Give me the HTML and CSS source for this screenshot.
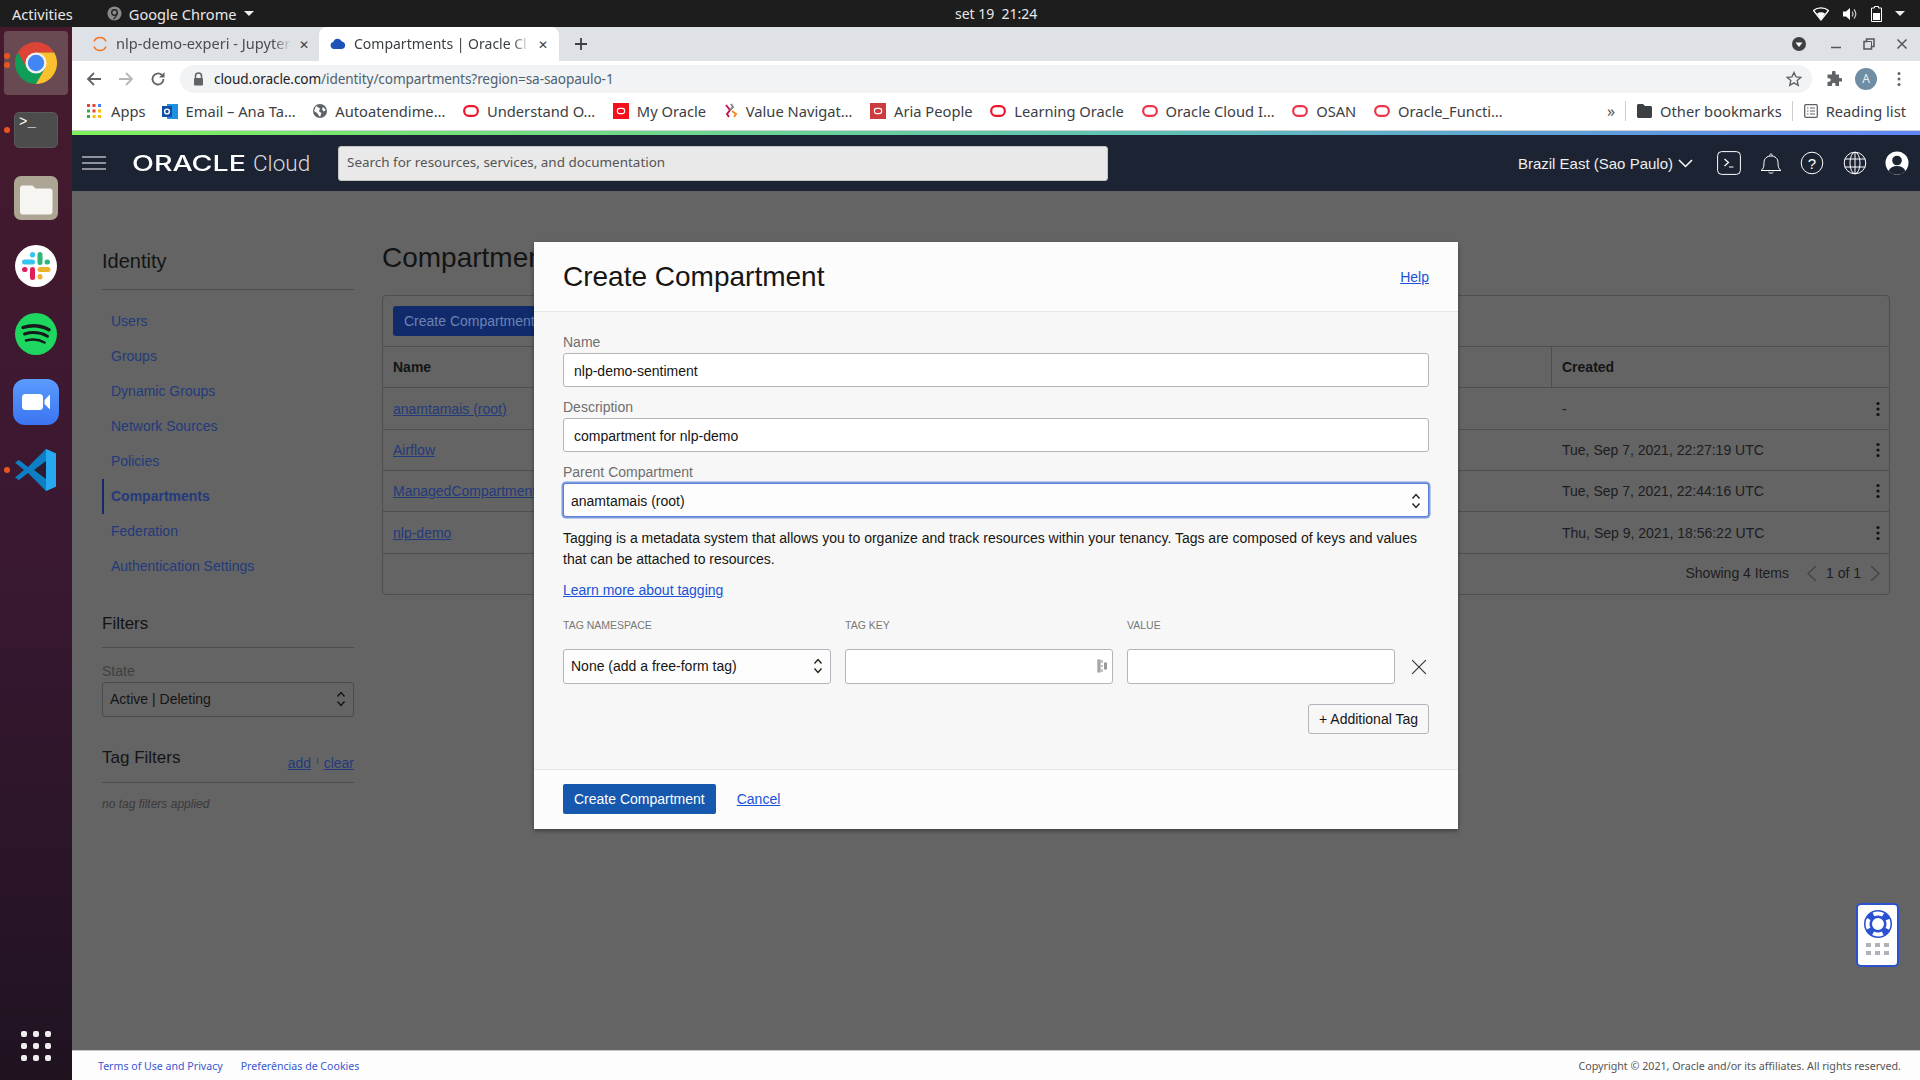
FILE: index.html
```html
<!DOCTYPE html>
<html lang="en">
<head>
  <meta charset="UTF-8">
  <title>Compartments | Oracle Cloud Infrastructure</title>
  <link rel="stylesheet" href="styles.css">
</head>
<body>
  <svg class="sprites" width="0" height="0">
    <symbol id="ring" viewBox="0 0 16 16"><rect x="1.2" y="3.2" width="13.6" height="9.6" rx="4.6" fill="none" stroke="currentColor" stroke-width="2.2"/></symbol>
    <symbol id="updown" viewBox="0 0 10 18"><path d="M1.5 6.5 5 2.5l3.5 4M1.5 11.5l3.5 4 3.5-4" fill="none" stroke="currentColor" stroke-width="1.4"/></symbol>
    <symbol id="kebab" viewBox="0 0 6 16"><circle cx="3" cy="2.5" r="1.6"/><circle cx="3" cy="8" r="1.6"/><circle cx="3" cy="13.5" r="1.6"/></symbol>
  </svg>

  <!-- gnome top bar -->
  <div class="topbar">
    <span class="topbar-activities">Activities</span>
    <span class="topbar-app">
      <svg width="15" height="15" viewBox="0 0 16 16"><circle cx="8" cy="8" r="7.5" fill="#8a8a8a"/><circle cx="8" cy="7" r="3" fill="none" stroke="#222" stroke-width="1.4"/><path d="M11 7c0 3-2 5-4 7" fill="none" stroke="#222" stroke-width="1.4"/></svg>
      Google Chrome
      <i class="caret"></i>
    </span>
    <span class="topbar-clock">set 19&nbsp; 21:24</span>
    <span class="topbar-status">
      <svg width="16" height="14" viewBox="0 0 16 14"><path d="M0.5 3.5C4.5 0 11.5 0 15.5 3.5L8 13Z" fill="none" stroke="#fff" stroke-width="1.3"/><path d="M4 6.5c2.400-1.700 5.600-1.700 8 0L8 13Z" fill="#fff"/></svg>
      <svg width="16" height="14" viewBox="0 0 16 14"><path d="M1 4.500h3L8 1v12L4 9.500H1Z" fill="#fff"/><path d="M10 4.500c1.200 1.500 1.200 3.500 0 5M12 2.500c2.200 2.700 2.200 6.300 0 9" fill="none" stroke="#ccc" stroke-width="1.200"/></svg>
      <svg width="11" height="16" viewBox="0 0 11 16"><path d="M3.500 0.500h4v1.500h3v13.500h-10V2h3Z" fill="none" stroke="#fff" stroke-width="1"/><rect x="2" y="7" width="7" height="7" fill="#fff"/></svg>
      <i class="caret"></i>
    </span>
  </div>

  <div class="desktop">
    <!-- launcher -->
    <div class="dock">
      <div class="dock-item dock-active">
        <i class="run-dot run-dot-a"></i><i class="run-dot run-dot-b"></i>
        <svg width="46" height="46" viewBox="0 0 48 48">
          <path d="M43 13A22 22 0 0 0 5 13L14.500 29.500 24 13Z" fill="#db4437"/>
          <path d="M5 13A22 22 0 0 0 24 46L33.500 29.500H14.500Z" fill="#0f9d58"/>
          <path d="M24 46A22 22 0 0 0 43 13H24L33.500 29.500Z" fill="#fbc02d"/>
          <circle cx="24" cy="24" r="11" fill="#f1f1f1"/><circle cx="24" cy="24" r="8.500" fill="#4285f4"/>
        </svg>
      </div>
      <div class="dock-item">
        <i class="run-dot"></i>
        <div class="tile-terminal">&gt;_</div>
      </div>
      <div class="dock-item">
        <svg width="44" height="44" viewBox="0 0 44 44">
          <rect width="44" height="44" rx="7" fill="#aca593"/>
          <path d="M6 12c0-1.500 1-2.500 2.500-2.500h10l3 3H36c1.500 0 2.500 1 2.500 2.500v21c0 1.500-1 2.500-2.500 2.500H8.500C7 38.500 6 37.500 6 36Z" fill="#f6f5f2"/>
        </svg>
      </div>
      <div class="dock-item">
        <svg width="42" height="42" viewBox="0 0 42 42">
          <circle cx="21" cy="21" r="21" fill="#fff"/>
          <rect x="7" y="14.500" width="13" height="5" rx="2.500" fill="#36c5f0"/><rect x="15" y="7" width="5" height="5.500" rx="2.500" fill="#36c5f0"/>
          <rect x="22.500" y="7" width="5" height="13" rx="2.500" fill="#2eb67d"/><rect x="29.500" y="14.500" width="5.500" height="5" rx="2.500" fill="#2eb67d"/>
          <rect x="22.500" y="22" width="13" height="5" rx="2.500" fill="#ecb22e"/><rect x="22.500" y="29" width="5" height="5.500" rx="2.500" fill="#ecb22e"/>
          <rect x="15" y="22" width="5" height="13" rx="2.500" fill="#e01e5a"/><rect x="7" y="22" width="5.500" height="5" rx="2.500" fill="#e01e5a"/>
        </svg>
      </div>
      <div class="dock-item">
        <svg width="42" height="42" viewBox="0 0 42 42">
          <circle cx="21" cy="21" r="21" fill="#1ed760"/>
          <path d="M8 14.500c8.500-2.800 18-2 26 2.200" fill="none" stroke="#17191a" stroke-width="3.400" stroke-linecap="round"/>
          <path d="M9.500 21c7.500-2.200 16-1.600 23 2.200" fill="none" stroke="#17191a" stroke-width="3" stroke-linecap="round"/>
          <path d="M11 27.500c6-1.600 13-1.200 18.500 2" fill="none" stroke="#17191a" stroke-width="2.600" stroke-linecap="round"/>
        </svg>
      </div>
      <div class="dock-item">
        <svg width="46" height="46" viewBox="0 0 46 46">
          <defs><linearGradient id="zoombg" x1="0" y1="0" x2="0" y2="1"><stop offset="0" stop-color="#5b9cff"/><stop offset="1" stop-color="#3a74f0"/></linearGradient></defs>
          <rect width="46" height="46" rx="12" fill="url(#zoombg)"/>
          <rect x="9" y="15" width="21" height="16" rx="3.500" fill="#fff"/><path d="M31.500 21 37 15.500v15L31.500 25Z" fill="#fff"/>
        </svg>
      </div>
      <div class="dock-item">
        <i class="run-dot"></i>
        <svg width="44" height="44" viewBox="0 0 44 44">
          <path d="M32 1 14 19 5 12 1 14.500 10 22 1 29.500 5 32l9-7 18 18 10-4.500V5.500Z" fill="#0e7fc4"/>
          <path d="M32 1l10 4.500v33L32 43Z" fill="#27a9f1"/>
          <path d="M32 13v18L20 22Z" fill="#2f1a30"/>
        </svg>
      </div>
      <div class="dock-apps">
        <i></i><i></i><i></i><i></i><i></i><i></i><i></i><i></i><i></i>
      </div>
    </div>

    <div class="window">
      <!-- browser chrome -->
      <div class="tabstrip">
        <div class="tab">
          <svg width="16" height="16" viewBox="0 0 16 16"><path d="M2 5.500a6.500 6.500 0 0 1 12 0M2 10.500a6.500 6.500 0 0 0 12 0" fill="none" stroke="#f37726" stroke-width="1.600"/></svg>
          <span class="tab-title">nlp-demo-experi - Jupyter</span>
          <span class="tab-close">✕</span>
        </div>
        <div class="tab tab-active">
          <svg width="16" height="16" viewBox="0 0 16 16"><path d="M4 13a3.500 3.500 0 0 1-.7-6.900A4.500 4.500 0 0 1 11.800 5.500 3.800 3.800 0 0 1 12 13Z" fill="#1f52b8"/></svg>
          <span class="tab-title">Compartments | Oracle Cl</span>
          <span class="tab-close">✕</span>
        </div>
        <svg class="tab-new" width="14" height="14" viewBox="0 0 14 14"><path d="M7 1v12M1 7h12" stroke="#3c4043" stroke-width="1.800"/></svg>
        <div class="win-controls">
          <svg class="win-profile" width="14" height="14" viewBox="0 0 14 14"><circle cx="7" cy="7" r="7" fill="#3c4043"/><path d="M3.500 5.500h7L7 10Z" fill="#fff"/></svg>
          <svg width="12" height="12" viewBox="0 0 12 12"><path d="M1 9.500h10" stroke="#555" stroke-width="1.500"/></svg>
          <svg width="12" height="12" viewBox="0 0 12 12"><path d="M3.500 1h7.500v7.500H8.500V11H1V3.500h2.500Z" fill="none" stroke="#555" stroke-width="1.500"/><path d="M3.500 3.500h5V8.500" fill="none" stroke="#555" stroke-width="1"/></svg>
          <svg width="12" height="12" viewBox="0 0 12 12"><path d="M1.500 1.500l9 9M10.500 1.500l-9 9" stroke="#555" stroke-width="1.500"/></svg>
        </div>
      </div>

      <div class="toolbar">
        <svg class="tool-back" width="16" height="16" viewBox="0 0 16 16"><path d="M15 8H2M8 2 2 8l6 6" fill="none" stroke="#5f6368" stroke-width="1.800"/></svg>
        <svg class="tool-fwd" width="16" height="16" viewBox="0 0 16 16"><path d="M1 8h13M8 2l6 6-6 6" fill="none" stroke="#b4b6b9" stroke-width="1.800"/></svg>
        <svg class="tool-reload" width="16" height="16" viewBox="0 0 16 16"><path d="M13.500 8A5.500 5.500 0 1 1 11.800 4" fill="none" stroke="#5f6368" stroke-width="1.800"/><path d="M14.500 1v5.500H9Z" fill="#5f6368"/></svg>
        <div class="urlbar">
          <svg width="11" height="14" viewBox="0 0 11 14"><path d="M2.500 6V4a3 3 0 0 1 6 0v2" fill="none" stroke="#5f6368" stroke-width="1.500"/><rect x="1" y="6" width="9" height="7.500" rx="1" fill="#5f6368"/></svg>
          <span class="url-text"><b>cloud.oracle.com</b>/identity/compartments?region=sa-saopaulo-1</span>
          <svg class="url-star" width="16" height="16" viewBox="0 0 16 16"><path d="M8 1.500l2 4.400 4.700.5-3.500 3.200 1 4.700L8 11.900l-4.200 2.400 1-4.700L1.300 6.400 6 5.900Z" fill="none" stroke="#5f6368" stroke-width="1.400"/></svg>
        </div>
        <svg class="tool-ext" width="16" height="16" viewBox="0 0 16 16"><path d="M6 1.500a1.800 1.800 0 0 1 3.600 0V3.500H13V7h1.700a1.800 1.800 0 0 1 0 3.600H13V15H9.500v-1.500a1.800 1.800 0 0 0-3.600 0V15H1.500v-4.200H3a1.800 1.800 0 0 0 0-3.600H1.500V3.500H6Z" fill="#5f6368"/></svg>
        <span class="tool-avatar">A</span>
        <svg class="tool-menu" width="4" height="16" viewBox="0 0 4 16"><circle cx="2" cy="2.500" r="1.500" fill="#5f6368"/><circle cx="2" cy="8" r="1.500" fill="#5f6368"/><circle cx="2" cy="13.500" r="1.500" fill="#5f6368"/></svg>
      </div>

      <div class="bookmarks">
        <span class="bm bm-apps">
          <svg class="bm-icon" width="14" height="14" viewBox="0 0 14 14"><g fill="#ea4335"><rect width="3" height="3"/><rect x="5.500" width="3" height="3"/></g><rect x="11" width="3" height="3" fill="#4285f4"/><rect y="5.500" width="3" height="3" fill="#34a853"/><rect x="5.500" y="5.500" width="3" height="3" fill="#ea4335"/><rect x="11" y="5.500" width="3" height="3" fill="#fbbc04"/><rect y="11" width="3" height="3" fill="#34a853"/><rect x="5.500" y="11" width="3" height="3" fill="#fbbc04"/><rect x="11" y="11" width="3" height="3" fill="#fbbc04"/></svg>
          Apps
        </span>
        <span class="bm">
          <svg class="bm-icon" width="16" height="16" viewBox="0 0 16 16"><rect x="5" y="1" width="11" height="15" fill="#1e90e0"/><rect x="0" y="3" width="10" height="11" fill="#0f4fa8"/><circle cx="5" cy="8.500" r="2.400" fill="none" stroke="#fff" stroke-width="1.400"/></svg>
          Email – Ana Ta…
        </span>
        <span class="bm">
          <svg class="bm-icon" width="14" height="14" viewBox="0 0 14 14"><circle cx="7" cy="7" r="7" fill="#5f6368"/><path d="M3 2l4 2.500-1 3 2.500 1.500L7 13 4 9 1 7Zm7 1l3 3-2.500 1.500L9 5Z" fill="#fff"/></svg>
          Autoatendime…
        </span>
        <span class="bm"><svg class="bm-icon bm-ring" width="16" height="16"><use href="#ring"/></svg>Understand O…</span>
        <span class="bm"><span class="bm-square bm-square-bright"><svg width="16" height="16"><use href="#ring"/></svg></span>My Oracle</span>
        <span class="bm">
          <svg class="bm-icon" width="14" height="16" viewBox="0 0 14 16"><path d="M2 2l4 5-3 4 2 3" fill="none" stroke="#c2185b" stroke-width="2"/><path d="M7 1l2 3-3 3" fill="none" stroke="#888" stroke-width="2"/><path d="M8 8l4 3-2 3" fill="none" stroke="#f28c28" stroke-width="2"/></svg>
          Value Navigat…
        </span>
        <span class="bm"><span class="bm-square"><svg width="16" height="16"><use href="#ring"/></svg></span>Aria People</span>
        <span class="bm"><svg class="bm-icon bm-ring" width="16" height="16"><use href="#ring"/></svg>Learning Oracle</span>
        <span class="bm"><svg class="bm-icon bm-ring bm-ring-soft" width="16" height="16"><use href="#ring"/></svg>Oracle Cloud I…</span>
        <span class="bm"><svg class="bm-icon bm-ring bm-ring-soft" width="16" height="16"><use href="#ring"/></svg>OSAN</span>
        <span class="bm"><svg class="bm-icon bm-ring bm-ring-soft" width="16" height="16"><use href="#ring"/></svg>Oracle_Functi…</span>
        <span class="bm-more">»</span>
        <span class="bm bm-sep">
          <svg class="bm-icon" width="15" height="14" viewBox="0 0 15 14"><path d="M0 1.500C0 .7.700 0 1.500 0H6l2 2h5.500c.800 0 1.500.700 1.500 1.500v9c0 .800-.700 1.500-1.500 1.500h-12C.700 14 0 13.300 0 12.500Z" fill="#3c4043"/></svg>
          Other bookmarks
        </span>
        <span class="bm bm-sep">
          <svg class="bm-icon" width="14" height="14" viewBox="0 0 14 14"><rect x=".7" y=".7" width="12.600" height="12.600" rx="1" fill="none" stroke="#5f6368" stroke-width="1.300"/><path d="M3 4h1.500M6 4h5M3 7h1.500M6 7h5M3 10h1.500M6 10h5" stroke="#5f6368" stroke-width="1.200"/></svg>
          Reading list
        </span>
      </div>
      <div class="load-line"></div>

      <!-- oracle console header -->
      <div class="app-header">
        <svg class="hamburger" width="24" height="14" viewBox="0 0 24 14"><path d="M0 1h24M0 7h24M0 13h24" stroke="#fff" stroke-width="1.200"/></svg>
        <span class="logo"><span class="logo-oracle">ORACLE</span><span class="logo-cloud">Cloud</span></span>
        <div class="search">Search for resources, services, and documentation</div>
        <span class="region">Brazil East (Sao Paulo)
          <svg width="15" height="9" viewBox="0 0 15 9"><path d="M1 1l6.500 6.500L14 1" fill="none" stroke="#fff" stroke-width="1.500"/></svg>
        </span>
        <div class="header-icons">
          <svg width="24" height="24" viewBox="0 0 24 24"><rect x=".6" y=".6" width="22.800" height="22.800" rx="4" fill="none" stroke="#fff" stroke-width="1"/><path d="M7.500 8l4 3.500-4 3.500M12 16h4.500" fill="none" stroke="#fff" stroke-width="1.200"/></svg>
          <svg width="22" height="26" viewBox="0 0 22 24"><path d="M1 19.500c2.500-1.500 3-4 3-8 0-4 3-6.500 7-6.500s7 2.500 7 6.500c0 4 .5 6.500 3 8ZM9.500 5c0-1 .500-2 1.500-2s1.500 1 1.500 2M8.500 21c.5 1.500 4.500 1.500 5 0" fill="none" stroke="#fff" stroke-width="1"/></svg>
          <svg width="24" height="24" viewBox="0 0 24 24"><circle cx="12" cy="12" r="10.800" fill="none" stroke="#fff" stroke-width="1"/><text class="help-mark" x="12" y="17.500" text-anchor="middle">?</text></svg>
          <svg width="24" height="24" viewBox="0 0 24 24"><g fill="none" stroke="#fff" stroke-width="1"><circle cx="12" cy="12" r="10.800"/><ellipse cx="12" cy="12" rx="5" ry="10.800"/><path d="M12 1v22M1.800 8h20.400M1.800 16h20.400"/></g></svg>
          <svg width="24" height="24" viewBox="0 0 24 24"><circle cx="12" cy="12" r="11.500" fill="#fff"/><circle cx="12" cy="9.500" r="4.800" fill="#1c2333"/><path d="M3.500 20c1.500-3.500 4.500-5 8.500-5s7 1.500 8.500 5c-2 2.500-5 3.500-8.500 3.500S5.500 22.500 3.500 20Z" fill="#1c2333"/></svg>
        </div>
      </div>

      <div class="app-body">
        <aside class="sidebar">
          <h2 class="side-title">Identity</h2>
          <nav class="side-nav">
            <a>Users</a>
            <a>Groups</a>
            <a>Dynamic Groups</a>
            <a>Network Sources</a>
            <a>Policies</a>
            <a class="current">Compartments</a>
            <a>Federation</a>
            <a>Authentication Settings</a>
          </nav>
          <h2 class="side-title side-title-filters">Filters</h2>
          <div class="side-label">State</div>
          <div class="side-select">Active | Deleting
            <svg width="10" height="18"><use href="#updown"/></svg>
          </div>
          <div class="side-title side-title-tags">
            <span>Tag Filters</span>
            <span class="tag-actions"><a>add</a><i>I</i><a>clear</a></span>
          </div>
          <div class="no-tags">no tag filters applied</div>
        </aside>

        <main class="content">
          <h1 class="page-title">Compartments</h1>
          <div class="table-card">
            <div class="table-tools"><span class="btn-dim">Create Compartment</span></div>
            <div class="table-row table-head"><span>Name</span><span class="cell-created">Created</span></div>
            <div class="table-row row-1"><a>anamtamais (root)</a><span class="cell-created">-</span><svg class="kebab" width="6" height="16"><use href="#kebab"/></svg></div>
            <div class="table-row"><a>Airflow</a><span class="cell-created">Tue, Sep 7, 2021, 22:27:19 UTC</span><svg class="kebab" width="6" height="16"><use href="#kebab"/></svg></div>
            <div class="table-row"><a>ManagedCompartmentForPaaS</a><span class="cell-created">Tue, Sep 7, 2021, 22:44:16 UTC</span><svg class="kebab" width="6" height="16"><use href="#kebab"/></svg></div>
            <div class="table-row row-1"><a>nlp-demo</a><span class="cell-created">Thu, Sep 9, 2021, 18:56:22 UTC</span><svg class="kebab" width="6" height="16"><use href="#kebab"/></svg></div>
            <div class="table-foot">
              <span>Showing 4 Items</span>
              <svg width="11" height="17" viewBox="0 0 11 17"><path d="M10 1 2 8.500l8 7.500" fill="none" stroke="#444" stroke-width="1.300"/></svg>
              <span>1 of 1</span>
              <svg width="11" height="17" viewBox="0 0 11 17"><path d="M1 1l8 7.500L1 16" fill="none" stroke="#444" stroke-width="1.300"/></svg>
            </div>
          </div>
        </main>

        <div class="help-widget">
          <svg width="30" height="30" viewBox="0 0 30 30"><circle cx="15" cy="15" r="10" fill="none" stroke="#2a52d0" stroke-width="8"/><circle cx="15" cy="15" r="10.500" fill="none" stroke="#fff" stroke-width="4" stroke-dasharray="10 6.490" stroke-dashoffset="5"/></svg>
          <div class="help-dots"><i></i><i></i><i></i><i></i><i></i><i></i></div>
        </div>

        <div class="modal">
          <div class="modal-head">
            <h1>Create Compartment</h1>
            <a>Help</a>
          </div>
          <div class="modal-body">
            <label class="field-label">Name</label>
            <div class="input">nlp-demo-sentiment</div>
            <label class="field-label">Description</label>
            <div class="input">compartment for nlp-demo</div>
            <label class="field-label">Parent Compartment</label>
            <div class="input input-select input-focus">anamtamais (root)
              <svg width="10" height="18"><use href="#updown"/></svg>
            </div>
            <p class="tag-intro">Tagging is a metadata system that allows you to organize and track resources within your tenancy. Tags are composed of keys and values that can be attached to resources.</p>
            <a class="tag-learn">Learn more about tagging</a>
            <div class="tag-grid">
              <span class="tag-label">TAG NAMESPACE</span>
              <span class="tag-label">TAG KEY</span>
              <span class="tag-label">VALUE</span>
              <span></span>
              <div class="input input-select input-tag">None (add a free-form tag)
                <svg width="10" height="18"><use href="#updown"/></svg>
              </div>
              <div class="input input-tag input-key">
                <svg width="11" height="14" viewBox="0 0 11 14"><path d="M1 1v12h2V1ZM5 1v3M5 6v2M5 10v3" stroke="#999" stroke-width="1.200" fill="#bbb"/><rect x="7" y="3.500" width="3" height="7" fill="#999"/></svg>
              </div>
              <div class="input input-tag"></div>
              <svg class="tag-remove" width="16" height="16" viewBox="0 0 14 14"><path d="M1 1l12 12M13 1 1 13" stroke="#333" stroke-width="1"/></svg>
            </div>
            <div class="tag-add"><span class="btn-outline">+ Additional Tag</span></div>
          </div>
          <div class="modal-foot">
            <span class="btn-primary">Create Compartment</span>
            <a>Cancel</a>
          </div>
        </div>
      </div>

      <div class="app-footer">
        <a>Terms of Use and Privacy</a>
        <a>Preferências de Cookies</a>
        <span class="copyright">Copyright © 2021, Oracle and/or its affiliates. All rights reserved.</span>
      </div>
    </div>
  </div>
</body>
</html>
```
FILE: styles.css
```css
* {
  box-sizing: border-box;
}
html, body {
  margin: 0;
  height: 100%;
}
body {
  width: 1920px;
  height: 1080px;
  overflow: hidden;
  display: flex;
  flex-direction: column;
  font-family: "Liberation Sans", Arial, sans-serif;
  font-size: 14px;
}
a {
  text-decoration: underline;
}
i {
  font-style: normal;
}
.sprites {
  position: absolute;
}

/* top bar */
.topbar {
  height: 27px;
  flex: none;
  background-color: #1d1d1d;
  color: #e8e8e8;
  display: flex;
  align-items: center;
  font-family: "Noto Sans", sans-serif;
  font-size: 14.6px;
  position: relative;
}
.topbar-activities {
  margin-left: 12px;
}
.topbar-app {
  margin-left: 34px;
  display: flex;
  align-items: center;
  gap: 7px;
}
.caret {
  display: inline-block;
  width: 0;
  height: 0;
  border-left: 5px solid transparent;
  border-right: 5px solid transparent;
  border-top: 5px solid #eee;
}
.topbar-clock {
  position: absolute;
  left: 955px;
  width: 82px;
  font-size: 14px;
  text-align: center;
  white-space: nowrap;
}
.topbar-status {
  margin-left: auto;
  margin-right: 15px;
  display: flex;
  align-items: center;
  gap: 13px;
}

.desktop {
  flex: 1;
  display: flex;
  min-height: 0;
}

/* launcher */
.dock {
  width: 72px;
  flex: none;
  padding-top: 1px;
  background: linear-gradient(180deg, #461a2c 0%, #3a1832 50%, #1f1320 100%);
  display: flex;
  flex-direction: column;
  align-items: center;
}
.dock-item {
  width: 64px;
  height: 68px;
  flex: none;
  display: flex;
  align-items: center;
  justify-content: center;
  position: relative;
}
.dock-active {
  background-color: #6a4a52;
  border-radius: 4px;
  height: 64px;
  margin-bottom: 1px;
  margin-top: 3px;
}
.run-dot {
  position: absolute;
  left: 0;
  top: 31px;
  width: 6px;
  height: 6px;
  border-radius: 50%;
  background-color: #e95420;
}
.dock-active .run-dot {
  left: 0;
}
.dock-active .run-dot-a {
  top: 22px;
}
.dock-active .run-dot-b {
  top: 31px;
}
.tile-terminal {
  width: 44px;
  height: 36px;
  background-color: #4c4c4c;
  border-radius: 5px;
  border: 1px solid #5a5a5a;
  color: #fff;
  font-family: "Liberation Mono", monospace;
  font-size: 14px;
  line-height: 14px;
  padding: 2px 0 0 4px;
}
.dock-apps {
  margin-top: auto;
  margin-bottom: 19px;
  display: grid;
  grid-template-columns: repeat(3, 6px);
  gap: 6px;
}
.dock-apps i {
  width: 6px;
  height: 6px;
  border-radius: 2px;
  background-color: #eee;
}

.window {
  flex: 1;
  min-width: 0;
  display: flex;
  flex-direction: column;
}

/* tabs */
.tabstrip {
  height: 34px;
  flex: none;
  background-color: #dee1e6;
  display: flex;
  align-items: stretch;
  font-family: "Noto Sans", sans-serif;
  font-size: 14.6px;
  color: #3c4043;
}
.tab {
  padding: 0 5px 0 11px;
  display: flex;
  align-items: center;
  gap: 8px;
  white-space: nowrap;
}
.tab:first-child {
  width: 247px;
  padding-left: 20px;
  padding-right: 0;
}
.tab-active {
  width: 240px;
  background-color: #fff;
  border-radius: 8px 8px 0 0;
  padding-left: 11px;
  font-size: 14px;
}
.tab-title {
  flex: 1;
  overflow: hidden;
  margin-bottom: 2px;
  -webkit-mask-image: linear-gradient(90deg, #000 90%, transparent);
  mask-image: linear-gradient(90deg, #000 90%, transparent);
}
.tab:first-child .tab-title {
  color: #4a4d52;
}
.tab-close {
  font-size: 12px;
  width: 12px;
  margin-right: 4px;
}
.tab:first-child .tab-close {
  margin-right: 8px;
}
.tab-new {
  align-self: center;
  margin-left: 15px;
}
.win-controls {
  margin-left: auto;
  margin-right: 12px;
  display: flex;
  align-items: center;
  gap: 21px;
}
.win-profile {
  margin-right: 3px;
}

/* toolbar */
.toolbar {
  height: 32px;
  flex: none;
  background-color: #fff;
  padding-top: 4px;
  display: flex;
  align-items: center;
}
.tool-back {
  margin-left: 14px;
}
.tool-fwd {
  margin-left: 16px;
}
.tool-reload {
  margin-left: 16px;
}
.urlbar {
  margin-left: 14px;
  width: 1632px;
  height: 28px;
  background-color: #f1f3f4;
  border-radius: 14px;
  display: flex;
  align-items: center;
  padding: 0 10px 0 13px;
  gap: 10px;
}
.url-text {
  font-family: "Noto Sans", sans-serif;
  font-size: 13.6px;
  color: #4f5f70;
  letter-spacing: -0.1px;
  margin-bottom: 2px;
}
.url-text b {
  font-weight: 400;
  color: #202124;
}
.url-star {
  margin-left: auto;
}
.tool-ext {
  margin-left: 14px;
}
.tool-avatar {
  margin-left: 13px;
  width: 22px;
  height: 22px;
  border-radius: 50%;
  background-color: #6f8ea3;
  color: #e8eef2;
  font-family: "Noto Sans", sans-serif;
  font-size: 12px;
  text-align: center;
  line-height: 22px;
}
.tool-menu {
  margin-left: 20px;
}

/* bookmarks */
.bookmarks {
  height: 38px;
  flex: none;
  background-color: #fff;
  border-bottom: 1px solid #d0d0d0;
  padding: 0 0 1px 15px;
  display: flex;
  align-items: center;
  font-family: "Noto Sans", sans-serif;
  font-size: 14.7px;
  color: #3c4043;
  white-space: nowrap;
}
.bm {
  display: flex;
  align-items: center;
  gap: 8px;
  margin-right: 17.700px;
}
.bm-apps {
  gap: 10px;
  margin-right: 16px;
}
.bm-ring {
  color: #f0142a;
}
.bm-ring-soft {
  color: #ee3348;
}
.bm-square {
  width: 16px;
  height: 16px;
  background-color: #ce3b3f;
  color: #fff;
  display: flex;
}
.bm-square svg {
  transform: scale(.55);
}
.bm-square-bright {
  background-color: #f50f1c;
}
.bm-more {
  margin-left: auto;
  margin-right: 10px;
  font-size: 16px;
  color: #555;
}
.bm-sep {
  margin-right: 10px;
  padding-left: 11px;
  height: 20px;
  border-left: 1px solid #ccc;
}
.bm-sep:last-child {
  margin-right: 14px;
}
.load-line {
  height: 4px;
  flex: none;
  background: linear-gradient(90deg, #7ef25a 0%, #5fbfb8 60%, #5f84f8 100%);
}

/* console header */
.app-header {
  height: 56px;
  flex: none;
  background-color: #1c2333;
  color: #fff;
  display: flex;
  align-items: center;
}
.hamburger {
  margin-left: 10px;
}
.logo {
  margin-left: 26px;
  width: 206px;
  display: flex;
  align-items: center;
  white-space: nowrap;
}
.logo-oracle {
  font-family: Inter, sans-serif;
  font-weight: 500;
  font-size: 21px;
  display: inline-block;
  width: 121px;
  transform: scaleX(1.36);
  transform-origin: left center;
}
.logo-cloud {
  font-family: Roboto, sans-serif;
  font-weight: 300;
  font-size: 22.5px;
  color: #d8dade;
}
.search {
  width: 770px;
  height: 35px;
  background-color: #e9e9e9;
  border: 1px solid #c4c4c4;
  border-radius: 3px;
  color: #555;
  font-family: "Noto Sans", sans-serif;
  font-size: 13.45px;
  line-height: 31px;
  padding-left: 8px;
}
.region {
  margin-left: auto;
  display: flex;
  align-items: center;
  gap: 5px;
  font-size: 15px;
  color: #eee;
  white-space: nowrap;
}
.header-icons {
  margin-left: 24px;
  margin-right: 11px;
  display: flex;
  align-items: center;
  gap: 18.500px;
}
.help-mark {
  font-family: "Liberation Sans", sans-serif;
  font-size: 15px;
  fill: #fff;
}

/* page underneath the dialog, already dimmed */
.app-body {
  flex: 1;
  min-height: 0;
  position: relative;
  background-color: #646464;
  color: #141414;
  display: flex;
  padding: 0 30px;
  gap: 28px;
}
.sidebar {
  width: 252px;
  flex: none;
  padding-top: 58px;
}
.side-title {
  margin: 0;
  font-size: 20px;
  line-height: 24px;
  font-weight: 400;
  padding-bottom: 16px;
  border-bottom: 1px solid #4d4d4d;
}
.side-title-filters {
  font-size: 17px;
  margin-top: 28px;
  padding-bottom: 11px;
}
.side-title-tags {
  font-size: 17px;
  margin-top: 29px;
  padding-bottom: 12px;
  display: flex;
  justify-content: space-between;
  align-items: flex-end;
}
.side-nav {
  margin-top: 14px;
  display: flex;
  flex-direction: column;
}
.side-nav a {
  height: 35px;
  line-height: 35px;
  padding-left: 9px;
  text-decoration: none;
  color: #233a7c;
}
.side-nav a.current {
  font-weight: 700;
  border-left: 2px solid #142a6e;
  padding-left: 7px;
}
.side-label {
  margin-top: 15px;
  line-height: 17px;
  color: #404040;
}
.side-select {
  margin-top: 2px;
  height: 35px;
  border: 1px solid #4a4a4a;
  border-radius: 3px;
  padding: 0 7px 2px;
  display: flex;
  align-items: center;
  justify-content: space-between;
}
.tag-actions {
  font-size: 14px;
  line-height: 16px;
  color: #233a7c;
  display: flex;
  gap: 5px;
  margin-bottom: -1px;
}
.tag-actions i {
  font-size: 9px;
  line-height: 12px;
}
.no-tags {
  margin-top: 14px;
  line-height: 14px;
  font-size: 12px;
  font-style: italic;
  color: #3a3a3a;
}
.content {
  flex: 1;
  min-width: 0;
}
.page-title {
  margin: 0;
  padding-top: 50px;
  height: 104px;
  font-size: 28px;
  line-height: 34px;
  font-weight: 400;
}
.table-card {
  border: 1px solid #4e4e4e;
  border-radius: 4px;
}
.table-tools {
  height: 51px;
  padding: 10px;
  border-bottom: 1px solid #4e4e4e;
}
.btn-dim {
  display: inline-block;
  height: 30px;
  line-height: 30px;
  padding: 0 11px;
  width: 200px;
  border-radius: 3px;
  background-color: #102a6c;
  color: #6c83b3;
}
.table-row {
  height: 41px;
  padding-left: 10px;
  border-bottom: 1px solid #4e4e4e;
  display: flex;
  align-items: center;
  position: relative;
}
.row-1 {
  height: 42px;
}
.table-row a {
  color: #233a7c;
}
.table-head {
  font-weight: 700;
}
.cell-created {
  position: absolute;
  left: 1179px;
  height: 100%;
  display: flex;
  align-items: center;
  color: #1c1c22;
}
.table-head .cell-created {
  left: 1168px;
  padding-left: 10px;
  border-left: 1px solid #4e4e4e;
  color: #141414;
}
.kebab {
  position: absolute;
  right: 8px;
  fill: #111;
}
.table-foot {
  height: 40px;
  padding: 0 8px 2px 0;
  display: flex;
  align-items: center;
  justify-content: flex-end;
  gap: 9px;
  color: #1c1c22;
}
.table-foot span:first-child {
  margin-right: 8px;
}
.help-widget {
  position: absolute;
  left: 1784px;
  top: 712px;
  width: 43px;
  height: 64px;
  background-color: #fff;
  border: 2px solid #2a52d0;
  border-radius: 5px;
  display: flex;
  flex-direction: column;
  align-items: center;
  padding-top: 4px;
  gap: 4px;
}
.help-dots {
  display: grid;
  grid-template-columns: repeat(3, 5px);
  gap: 4px 4px;
}
.help-dots i {
  width: 5px;
  height: 4px;
  background-color: #b0b2ba;
}

/* dialog */
.modal {
  position: absolute;
  left: 462px;
  top: 51px;
  width: 924px;
  background-color: #f7f7f7;
  border-radius: 2px;
  box-shadow: 0 2px 4px rgba(0, 0, 0, .4);
  color: #161513;
  display: flex;
  flex-direction: column;
}
.modal-head {
  height: 70px;
  background-color: #fcfcfc;
  border-bottom: 1px solid #e6e6e6;
  padding: 0 29px;
  display: flex;
  align-items: center;
  justify-content: space-between;
}
.modal-head h1 {
  margin: 0;
  font-size: 28px;
  font-weight: 400;
}
.modal-head a, .tag-learn, .modal-foot a {
  color: #1a52d8;
}
.modal-body {
  padding: 22px 29px 0;
  height: 457px;
}
.field-label {
  display: block;
  line-height: 17px;
  margin-bottom: 2px;
  color: #6f6f6f;
}
.input {
  height: 34px;
  margin-bottom: 12px;
  background-color: #fff;
  border: 1px solid #b4b4bc;
  border-radius: 3px;
  padding: 1px 10px 0;
  display: flex;
  align-items: center;
}
.input-select {
  justify-content: space-between;
  padding: 1px 7px 0 7px;
  background-color: #fdfdfd;
}
.input-select svg {
  color: #222;
}
.input-focus {
  margin-bottom: 0;
  border-color: #5a7fd8;
  box-shadow: 0 0 0 1.5px #7d9be0;
}
.tag-intro {
  margin: 11px 0 0;
  line-height: 21px;
}
.tag-learn {
  display: block;
  margin-top: 10px;
  line-height: 21px;
}
.tag-grid {
  margin-top: 17px;
  display: grid;
  grid-template-columns: repeat(3, 268px) 1fr;
  column-gap: 14px;
  row-gap: 17px;
  align-items: center;
}
.tag-label {
  font-size: 10.5px;
  line-height: 14px;
  color: #777;
}
.input-tag {
  height: 35px;
  margin-bottom: 0;
  padding-top: 0;
  padding-bottom: 1px;
}
.input-key {
  justify-content: flex-end;
  padding-right: 4px;
}
.tag-remove {
  margin-left: 2px;
}
.tag-add {
  margin-top: 20px;
  display: flex;
  justify-content: flex-end;
}
.btn-outline {
  height: 30px;
  line-height: 28px;
  padding: 0 10px;
  border: 1px solid #b4b4bc;
  border-radius: 3px;
  background-color: #f7f7f7;
}
.modal-foot {
  height: 60px;
  background-color: #fcfcfc;
  border-top: 1px solid #e6e6e6;
  padding: 14px 29px 0;
  display: flex;
  align-items: flex-start;
  gap: 21px;
  line-height: 30px;
}
.btn-primary {
  height: 30px;
  padding: 0 11px;
  border-radius: 2px;
  background-color: #1558ae;
  color: #fff;
}

/* console footer */
.app-footer {
  height: 30px;
  flex: none;
  background-color: #fdfdfd;
  border-top: 1px solid #c0c4cc;
  padding: 0 19px 0 26px;
  display: flex;
  align-items: center;
  gap: 18px;
  font-family: "Noto Sans", sans-serif;
  font-size: 10.6px;
  color: #3a57d0;
}
.app-footer a {
  text-decoration: none;
}
.copyright {
  margin-left: auto;
  font-size: 10.7px;
  color: #555;
}
```
